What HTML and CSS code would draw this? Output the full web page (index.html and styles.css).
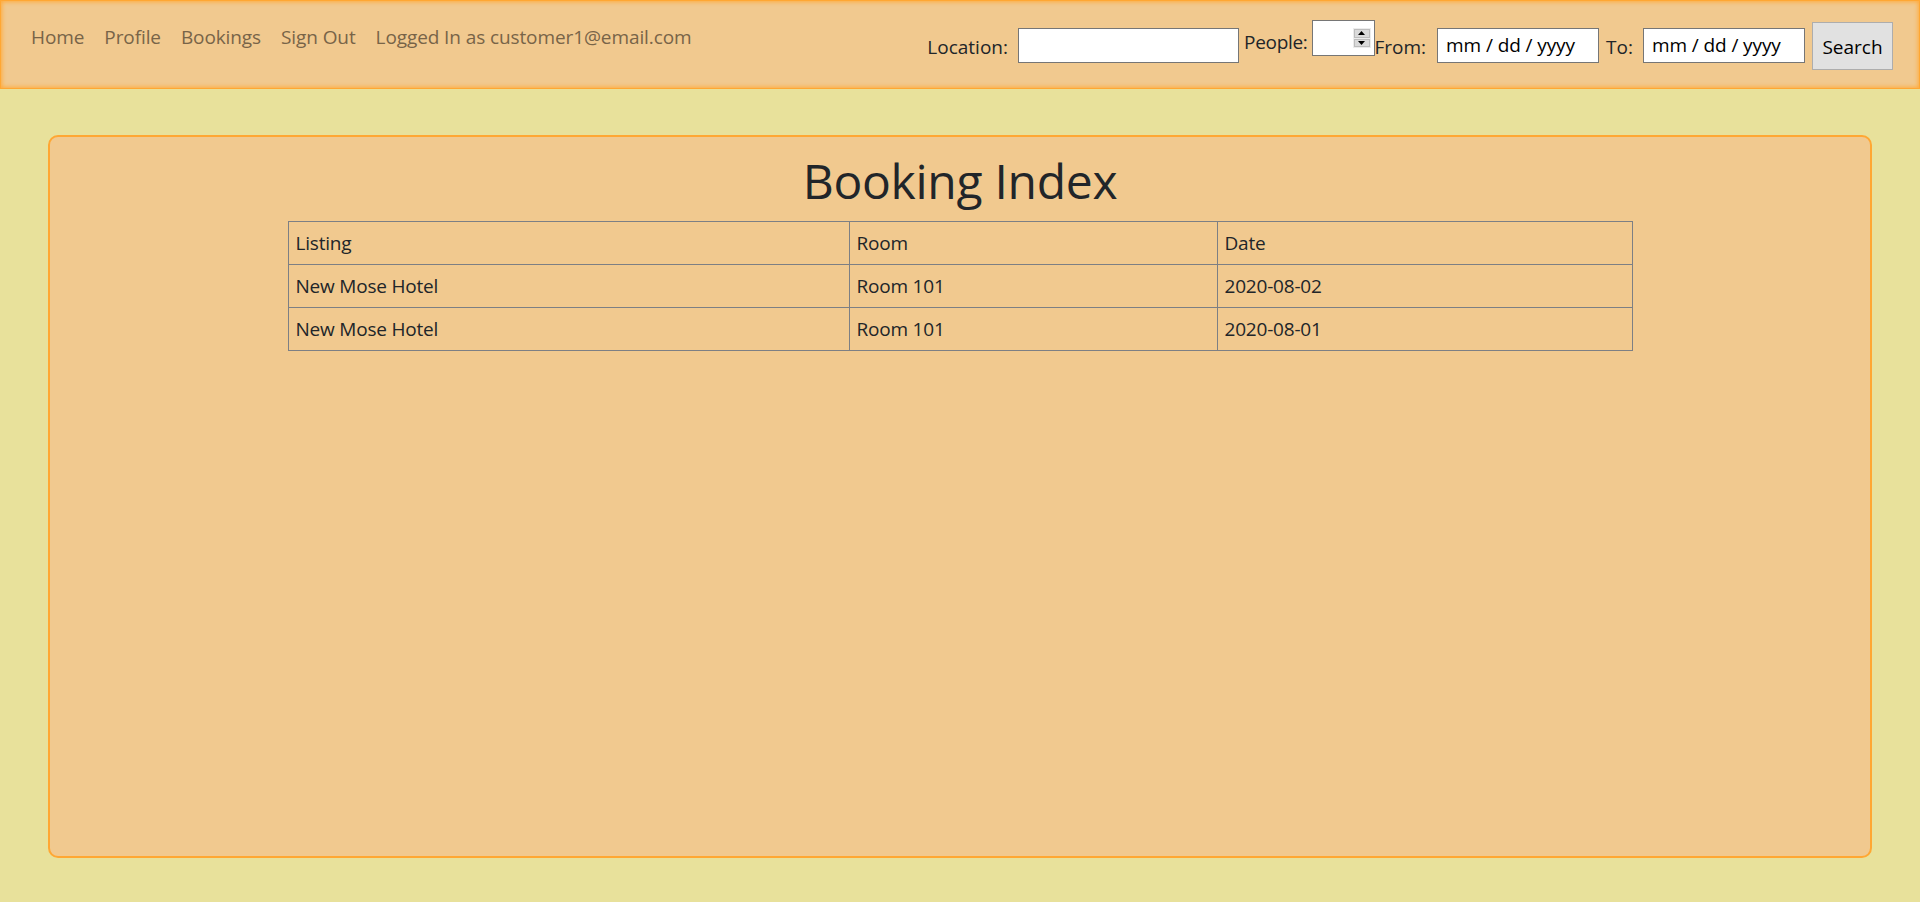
FILE: index.html
```html
<!DOCTYPE html>
<html lang="en">
<head>
<meta charset="utf-8">
<title>Booking Index</title>
<link rel="stylesheet" href="styles.css">
</head>
<body>
<nav class="navbar">
  <ul class="nav-links">
    <li><a class="nav-link" href="#">Home</a></li>
    <li><a class="nav-link" href="#">Profile</a></li>
    <li><a class="nav-link" href="#">Bookings</a></li>
    <li><a class="nav-link" href="#">Sign Out</a></li>
    <li><span class="nav-link">Logged In as customer1@email.com</span></li>
  </ul>
  <form class="search-form">
    <label class="lbl lbl-location" for="loc">Location:</label>
    <input class="field field-location" id="loc" type="text">
    <label class="lbl lbl-people" for="ppl">People:</label>
    <div class="number-box">
      <input class="number-input" id="ppl" type="text">
      <div class="spinner">
        <span class="spin-btn"><svg width="7" height="4" viewBox="0 0 7 4"><path d="M0 4 L3.5 0 L7 4 Z" fill="#000"/></svg></span>
        <span class="spin-btn"><svg width="7" height="4" viewBox="0 0 7 4"><path d="M0 0 L3.5 4 L7 0 Z" fill="#000"/></svg></span>
      </div>
    </div>
    <label class="lbl lbl-from" for="from">From:</label>
    <input class="field field-date" id="from" type="text" value="mm / dd / yyyy">
    <label class="lbl lbl-to" for="to">To:</label>
    <input class="field field-date" id="to" type="text" value="mm / dd / yyyy">
    <button class="btn-search" type="button">Search</button>
  </form>
</nav>

<main class="card">
  <h1 class="title">Booking Index</h1>
  <table class="bookings">
    <colgroup>
      <col class="c-listing">
      <col class="c-room">
      <col class="c-date">
    </colgroup>
    <thead>
      <tr><th>Listing</th><th>Room</th><th>Date</th></tr>
    </thead>
    <tbody>
      <tr><td>New Mose Hotel</td><td>Room 101</td><td>2020-08-02</td></tr>
      <tr><td>New Mose Hotel</td><td>Room 101</td><td>2020-08-01</td></tr>
    </tbody>
  </table>
</main>
</body>
</html>
```

FILE: styles.css
```css
* { box-sizing: border-box; }

html, body {
  margin: 0;
  padding: 0;
}

body {
  background: #e8e19b;
  font-family: "Open Sans", "Liberation Sans", sans-serif;
  font-size: 19px;
  color: #212529;
  height: 902px;
  overflow: hidden;
}

/* ---------- navbar ---------- */
.navbar {
  height: 89px;
  display: flex;
  justify-content: space-between;
  align-items: flex-start;
  background: #f1c98f;
  border: 1px solid #ffa733;
  box-shadow: inset 0 0 4px 1px #ffaa3a;
  padding: 11px 20px 10px 20px;
}

.nav-links {
  list-style: none;
  margin: 0;
  padding: 0;
  display: flex;
}

.nav-link {
  display: block;
  padding: 10px 10px;
  line-height: 30px;
  color: #786448;
  text-decoration: none;
  letter-spacing: -0.1px;
}

.search-form {
  display: flex;
  align-items: center;
  align-self: center;
  margin-right: 6px;
}

.lbl {
  line-height: 26px;
  white-space: nowrap;
}

.lbl-location { margin-top: 4px; margin-right: 10px; }
.lbl-people { margin-left: 5px; margin-right: 4px; margin-bottom: 6px; letter-spacing: -0.3px; }
.lbl-from { margin-top: 4px; margin-right: 11px; }
.lbl-to { margin-left: 7px; margin-right: 10px; margin-top: 4px; }

.field {
  height: 35px;
  border: 1px solid #767676;
  background: #fff;
  font-family: inherit;
  font-size: 19px;
  color: #000;
  padding: 0 8px;
  margin: 0;
  outline: none;
}

.field-location { width: 221px; }
.field-date { width: 162px; letter-spacing: -0.1px; }

.number-box {
  width: 63px;
  height: 36px;
  border: 1px solid #767676;
  background: #fff;
  display: flex;
  align-items: center;
  margin-bottom: 14px;
}

.number-input {
  width: 40px;
  height: 100%;
  border: 0;
  padding: 0;
  margin: 0;
  outline: none;
  background: transparent;
}

.spinner {
  margin-left: auto;
  margin-right: 3px;
  width: 19px;
  height: 20px;
  display: flex;
  flex-direction: column;
  background: #ececec;
  padding: 1px;
  gap: 1px;
}

.spin-btn {
  flex: 1;
  display: flex;
  align-items: center;
  justify-content: center;
  background: #dadada;
  border: 1px solid #bdbdbd;
}

.btn-search {
  margin-left: 7px;
  width: 81px;
  height: 48px;
  background: #e1e1e1;
  border: 1px solid #adadad;
  font-family: inherit;
  font-size: 19px;
  color: #000;
  padding: 2px 0 0 0;
  margin-top: 1px;
}

/* ---------- card ---------- */
.card {
  margin: 46px 48px 0 48px;
  height: 723px;
  background: #f1c98f;
  border: 2px solid #ffa733;
  border-radius: 10px;
  padding: 14px 16px;
  display: flex;
  flex-direction: column;
  align-items: center;
}

.title {
  margin: 0 0 10px 0;
  font-weight: 400;
  font-size: 48px;
  line-height: 60px;
  letter-spacing: -0.3px;
}

.bookings {
  width: 1344px;
  table-layout: fixed;
  border-collapse: collapse;
  border: 1px solid #7d7f84;
}

.c-listing { width: 561px; }
.c-room { width: 368px; }
.c-date { width: 415px; }

.bookings th,
.bookings td {
  border: 1px solid #7d7f84;
  padding: 6px 7px;
  line-height: 30px;
  font-weight: 400;
  text-align: left;
  letter-spacing: -0.2px;
}
```
